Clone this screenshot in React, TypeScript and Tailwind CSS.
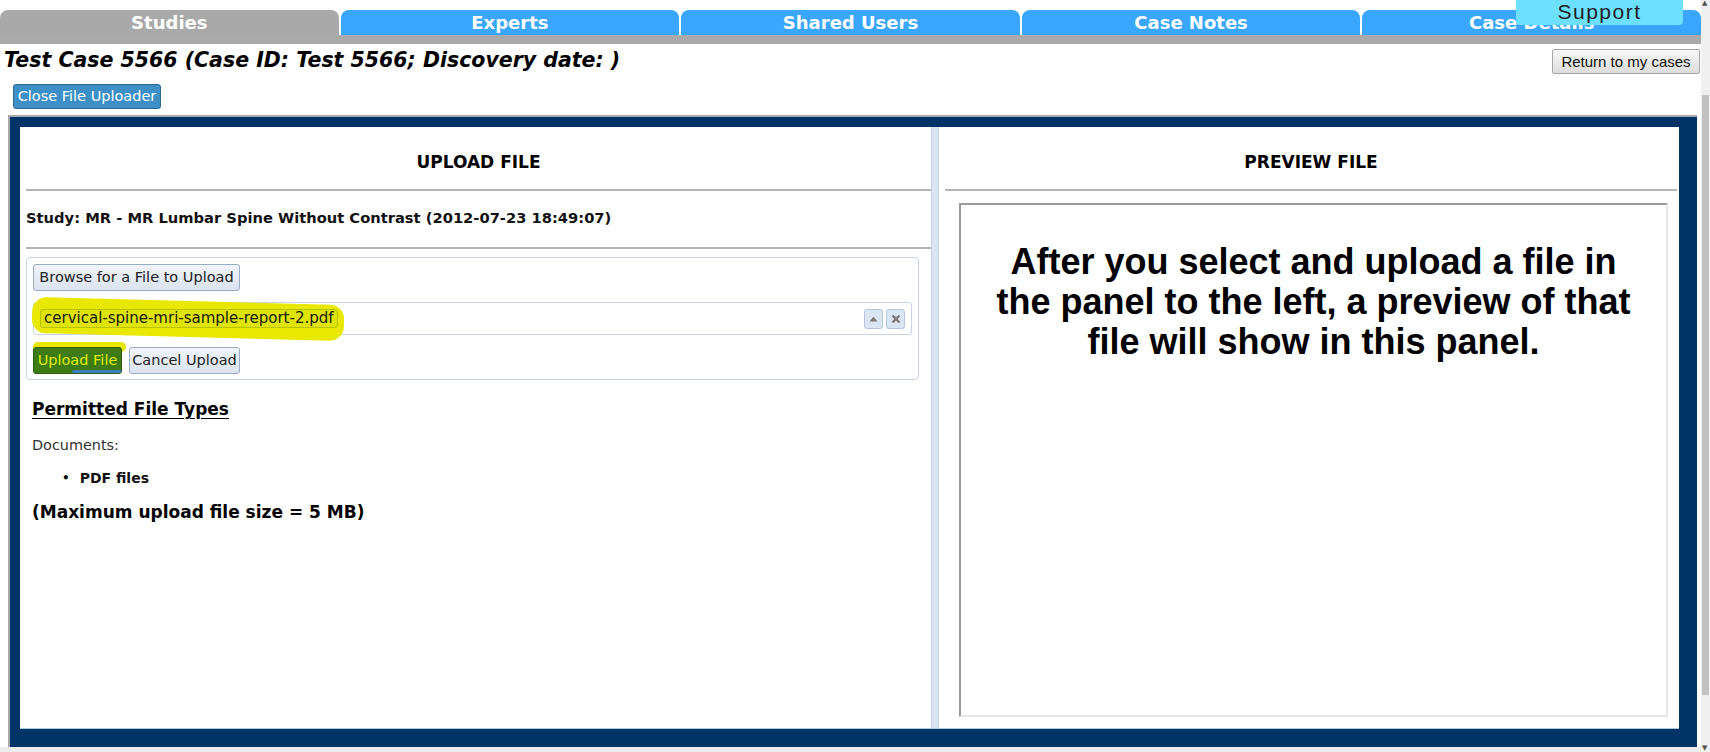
const tabs = ["Studies", "Experts", "Shared Users", "Case Notes", "Case Details"];

function PanelHeader({ label }: { label: string }) {
  return (
    <div className="border-b-2 border-[#b4b4b4] pt-[25px] pb-[17px] text-center text-[17px] font-bold leading-[20px]">
      {label}
    </div>
  );
}

export default function App() {
  return (
    <div className="flex h-[752px] w-[1710px] overflow-hidden bg-white font-['DejaVu_Sans',Verdana,sans-serif] text-black">
      <div className="relative flex w-[1701px] flex-col">
        {/* top tabs */}
        <div className="mt-[10px] grid grid-cols-5 gap-[2px]">
          {tabs.map((t, i) => (
            <div
              key={t}
              className={
                i === 0
                  ? "flex h-[25px] items-center justify-center rounded-t-[8px] bg-[#a9a9a9] text-[18px] font-bold leading-none text-white"
                  : "flex h-[25px] items-center justify-center rounded-t-[8px] bg-[#3aa6ff] text-[18px] font-bold leading-none text-white"
              }
            >
              {t}
            </div>
          ))}
        </div>
        <div className="h-[9px] bg-[#aaaaaa]" />

        <div className="absolute top-0 right-[18px] flex h-[25px] w-[167px] items-start justify-center rounded-b-[4px] bg-[#6de0ff] font-['Liberation_Sans',Arial,sans-serif] text-[21px] leading-[24px] tracking-[1.5px] text-[#1e1e1e]">
          Support
        </div>

        {/* case title row */}
        <div className="mt-[4px] flex items-start justify-between pl-[4px]">
          <div className="text-[20.5px] font-bold italic leading-[24px]">
            Test Case 5566 (Case ID: Test 5566; Discovery date: )
          </div>
          <button className="mt-[1px] mr-[1px] h-[25px] w-[148px] rounded-[2px] border border-[#a6a6a6] bg-gradient-to-b from-[#f7f7f7] to-[#dcdcdc] font-['Liberation_Sans',Arial,sans-serif] text-[15px] leading-none text-[#111]">
            Return to my cases
          </button>
        </div>

        <button className="mt-[10px] ml-[13px] h-[25px] w-[148px] rounded-[3px] border border-[#2a6a99] bg-[#3d8fc6] text-[14.5px] leading-none text-white">
          Close File Uploader
        </button>

        {/* uploader frame */}
        <div className="mt-[6px] ml-[8px] flex h-[632px] w-[1689px] border-t-2 border-l-2 border-[#a8a8a8] bg-[#003366] pt-[10px] pr-[18px] pb-[18px] pl-[10px]">
          <div className="flex flex-1 border-b border-[#b7c7dc] bg-white">
            {/* left panel */}
            <div className="flex w-[911px] flex-col pl-[6px]">
              <PanelHeader label="UPLOAD FILE" />
              <div className="border-b-2 border-[#b4b4b4] pt-[17px] pb-[19px] text-[14.7px] font-bold leading-[20px] text-[#111]">
                Study: MR - MR Lumbar Spine Without Contrast (2012-07-23 18:49:07)
              </div>

              <div className="mt-[8px] mr-[12px] rounded-[4px] border border-[#c6d4e7] px-[6px] pt-[6px] pb-[5px]">
                <button className="h-[27px] w-[207px] rounded-[3px] border border-[#9aabc6] bg-gradient-to-b from-[#f1f4f9] to-[#dbe3ef] text-[14.5px] leading-none text-[#222]">
                  Browse for a File to Upload
                </button>

                <div className="relative mt-[11px] flex h-[33px] items-center justify-between rounded-[3px] border border-[#c6d4e7] pr-[6px] pl-[6px]">
                  <span className="absolute top-[-2px] left-[-2px] h-[36px] w-[312px] rotate-[1.5deg] rounded-[14px] bg-[#e8e800]" />
                  <span className="relative h-[19px] rounded-[3px] border border-[#b9c200] bg-[#dfe400] px-[3px] text-[15px] leading-[17px] text-[#1a1a1a]">
                    cervical-spine-mri-sample-report-2.pdf
                  </span>
                  <div className="flex gap-[3px]">
                    <span className="flex h-[20px] w-[19px] items-center justify-center rounded-[3px] border border-[#b3c4dc] bg-[#dbe4f1]">
                      <svg width="9" height="6" viewBox="0 0 9 6">
                        <path d="M0.5 5.5 L4.5 0.8 L8.5 5.5 Z" fill="#7a7a7a" />
                      </svg>
                    </span>
                    <span className="flex h-[20px] w-[19px] items-center justify-center rounded-[3px] border border-[#b3c4dc] bg-[#dbe4f1]">
                      <svg width="10" height="10" viewBox="0 0 10 10">
                        <path d="M1.5 1.5 L8.5 8.5 M8.5 1.5 L1.5 8.5" stroke="#7a7a7a" strokeWidth="2.4" />
                      </svg>
                    </span>
                  </div>
                </div>

                <div className="mt-[12px] flex gap-[7px]">
                  <div className="relative">
                    <span className="absolute top-[-5px] left-0 right-[-4px] h-[10px] rounded-full bg-[#e6e600]" />
                    <button className="relative h-[27px] w-[89px] overflow-hidden rounded-[3px] border border-[#2e6010] bg-[#3e7b14] text-[14.5px] leading-none text-[#dcee00]">
                      Upload File
                      <span className="absolute right-0 bottom-0 left-[38px] h-[3px] rounded-tl-[6px] bg-[#3a7fc0]" />
                    </button>
                  </div>
                  <button className="h-[27px] w-[111px] rounded-[3px] border border-[#9aabc6] bg-gradient-to-b from-[#f1f4f9] to-[#dbe3ef] text-[14.5px] leading-none text-[#222]">
                    Cancel Upload
                  </button>
                </div>
              </div>

              <div className="mt-[19px] pl-[6px] text-[17px] font-bold leading-[20px] underline underline-offset-[3px]">
                Permitted File Types
              </div>
              <div className="mt-[17px] pl-[6px] text-[14.4px] leading-[18px] text-[#333]">Documents:</div>
              <div className="mt-[15px] flex items-center pl-[36px] text-[14px] font-bold leading-[18px] text-[#111]">
                <span className="mr-[10px] text-[12px]">•</span>
                PDF files
              </div>
              <div className="mt-[14px] pl-[6px] text-[17px] font-bold leading-[22px]">
                (Maximum upload file size = 5 MB)
              </div>
            </div>

            {/* splitter */}
            <div className="w-[8px] border-x border-[#c3d2e6] bg-[#dae4f2]" />

            {/* right panel */}
            <div className="flex flex-1 flex-col pr-[2px] pl-[6px]">
              <PanelHeader label="PREVIEW FILE" />
              <div className="mt-[12px] mr-[9px] mb-[11px] ml-[14px] flex-1 border-2 border-t-[#9b9b9b] border-r-[#e6e6e6] border-b-[#e6e6e6] border-l-[#9b9b9b] pt-[37px] text-center font-['Liberation_Sans',Arial,sans-serif] text-[36px] font-bold leading-[40px] text-black">
                After you select and upload a file in
                <br />
                the panel to the left, a preview of that
                <br />
                file will show in this panel.
              </div>
            </div>
          </div>
        </div>
        <div className="flex-1 bg-[#ececec]" />
      </div>

      {/* page scrollbar */}
      <div className="relative w-[9px] bg-[#f0f0f0]">
        <span className="absolute top-0 left-[1px] text-[7px] leading-none text-[#505050]">▲</span>
        <div className="absolute top-[95px] left-[1px] h-[600px] w-[7px] bg-[#c1c1c1]" />
        <span className="absolute bottom-0 left-[1px] text-[7px] leading-none text-[#505050]">▼</span>
      </div>
    </div>
  );
}
